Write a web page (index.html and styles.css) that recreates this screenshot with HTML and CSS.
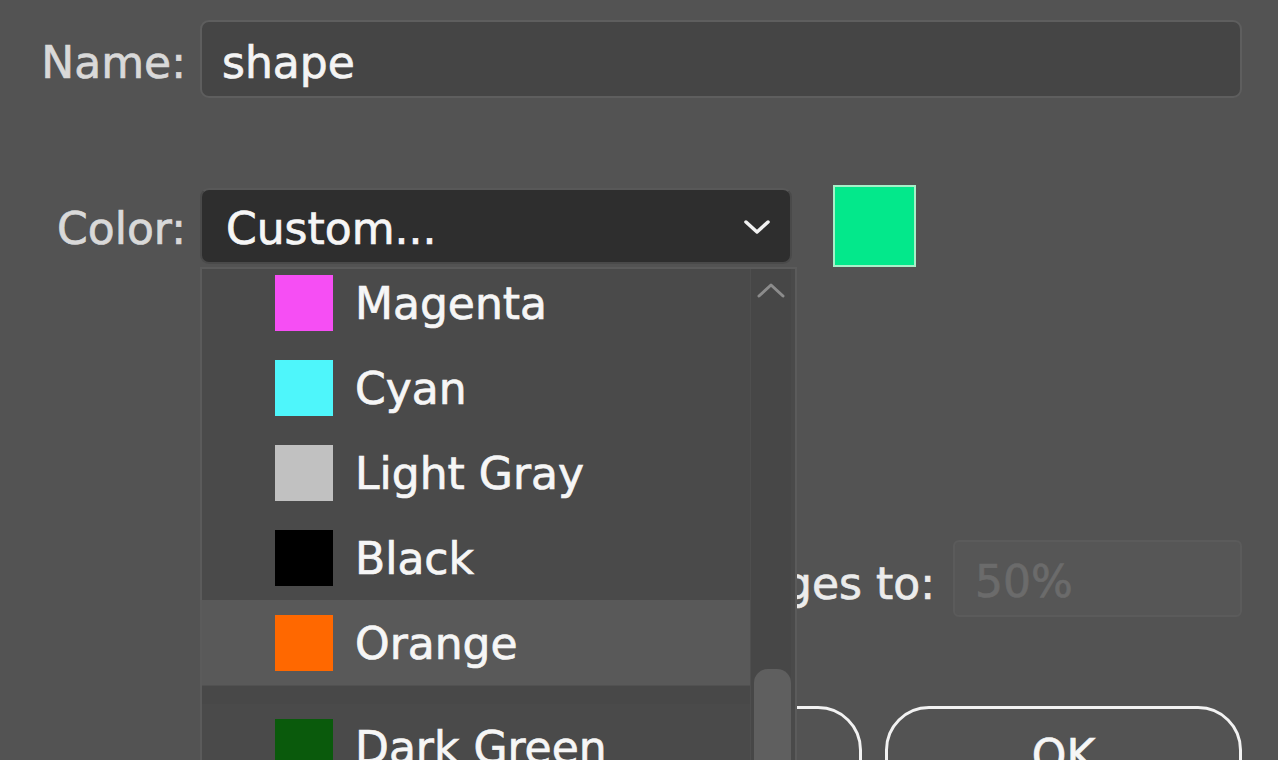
FILE: index.html
```html
<!DOCTYPE html>
<html>
<head>
<meta charset="utf-8">
<link rel="stylesheet" href="styles.css">
</head>
<body>
<div class="dialog">
  <div class="row name-row">
    <span class="lbl">Name:</span>
    <div class="text-field">shape</div>
  </div>
  <div class="row color-row">
    <span class="lbl">Color:</span>
    <div class="select-wrap">
      <div class="select">
        <span>Custom...</span>
        <svg class="chev" width="32" height="20" viewBox="0 0 32 20"><path d="M5 5 L16 15 L27 5" fill="none" stroke="#f2f2f2" stroke-width="3.5" stroke-linecap="round" stroke-linejoin="round"/></svg>
      </div>
      <div class="dropdown">
        <div class="items">
          <div class="item first"><span class="sw magenta"></span><span>Magenta</span></div>
          <div class="item"><span class="sw cyan"></span><span>Cyan</span></div>
          <div class="item"><span class="sw lgray"></span><span>Light Gray</span></div>
          <div class="item"><span class="sw black"></span><span>Black</span></div>
          <div class="item hl"><span class="sw orange"></span><span>Orange</span></div>
          <div class="sep"></div>
          <div class="item"><span class="sw dgreen"></span><span>Dark Green</span></div>
        </div>
        <div class="scrollbar">
          <svg class="up" width="32" height="18" viewBox="0 0 32 18"><path d="M4 15 L16 4 L28 15" fill="none" stroke="#8c8c8c" stroke-width="3" stroke-linecap="round" stroke-linejoin="round"/></svg>
          <div class="thumb"></div>
        </div>
      </div>
    </div>
    <div class="big-swatch"></div>
  </div>
  <div class="row dim-row">
    <span class="dim-lbl">Dim Images to:</span>
    <div class="dim-field">50%</div>
  </div>
  <div class="row btn-row">
    <button class="btn">Cancel</button>
    <button class="btn">OK</button>
  </div>
</div>
</body>
</html>
```

FILE: styles.css
```css
html, body {
  margin: 0;
  padding: 0;
  height: 100%;
  overflow: hidden;
}
body {
  background: #535353;
  font-family: "DejaVu Sans", "Liberation Sans", sans-serif;
  font-size: 44px;
  color: #f2f2f2;
  -webkit-text-stroke: 0.7px currentColor;
}
.dialog {
  padding: 20px 36px 0 0;
}
.row {
  display: flex;
  align-items: center;
}
.lbl {
  width: 186px;
  text-align: right;
  color: #d9d9d9;
  margin-right: 14px;
  flex: none;
}
.name-row .lbl {
  padding-top: 6px;
}
.color-row .lbl {
  padding-top: 4px;
}
.text-field {
  flex: 1;
  height: 74px;
  box-sizing: content-box;
  background: #454545;
  border: 2px solid #5e5e5e;
  border-radius: 9px;
  display: flex;
  align-items: center;
  padding: 6px 0 0 20px;
  height: 68px;
  color: #f4f4f4;
}
.color-row {
  margin-top: 87px;
  height: 82px;
}
.select-wrap {
  position: relative;
  width: 592px;
  flex: none;
}
.select {
  height: 72px;
  background: #2e2e2e;
  border: 2px solid #4a4a4a;
  border-top-color: #585858;
  border-radius: 9px;
  display: flex;
  align-items: center;
  justify-content: space-between;
  padding: 0 17px 0 24px;
  color: #f6f6f6;
}
.select span {
  padding-top: 5px;
}
.chev {
  display: block;
  margin-top: 2px;
}
.big-swatch {
  width: 79px;
  height: 78px;
  margin-left: 41px;
  background: #03e88b;
  border: 2px solid #a6f0c8;
  flex: none;
}
.dropdown {
  position: absolute;
  top: 79px;
  left: 0;
  width: 593px;
  height: 520px;
  background: #4a4a4a;
  border: 2px solid #5b5b5b;
  border-bottom: none;
  overflow: hidden;
  z-index: 5;
}
.items {
  margin-right: 44px;
}
.item {
  height: 85px;
  display: flex;
  align-items: center;
  padding-left: 73px;
  color: #f6f6f6;
}
.item span:last-child {
  padding-top: 2px;
}
.item.first {
  margin-top: -9px;
}
.item.hl {
  background: #595959;
}
.sep {
  height: 19px;
  border-top: 1px solid #515151;
  box-sizing: border-box;
  background: #484848;
}
.sw {
  width: 58px;
  height: 56px;
  margin-right: 22px;
  flex: none;
}
.magenta { background: #f64ef4; }
.cyan { background: #4ef6fb; }
.lgray { background: #c1c1c1; }
.black { background: #000000; }
.orange { background: #ff6800; }
.dgreen { background: #0a5a0c; }
.scrollbar {
  position: absolute;
  top: 0;
  right: 4px;
  width: 40px;
  bottom: 0;
  background: #474747;
  border-left: 1px solid #4f4f4f;
}
.up {
  position: absolute;
  top: 12px;
  left: 4px;
}
.thumb {
  position: absolute;
  top: 400px;
  left: 3px;
  right: 0;
  bottom: 0;
  background: #5f5f5f;
  border-radius: 14px 14px 0 0;
}
.dim-row {
  margin-top: 273px;
  justify-content: flex-end;
}
.dim-lbl {
  color: #ececec;
  margin-right: 18px;
  padding-top: 10px;
}
.dim-field {
  width: 265px;
  height: 67px;
  padding: 6px 0 0 20px;
  background: #565656;
  border: 2px solid #5b5b5b;
  border-radius: 6px;
  display: flex;
  align-items: center;
  color: #6b6b6b;
}
.btn-row {
  margin-top: 89px;
  justify-content: flex-end;
  gap: 23px;
}
.btn {
  width: 357px;
  height: 98px;
  background: transparent;
  border: 3px solid #f2f2f2;
  border-radius: 44px;
  color: #f6f6f6;
  font-family: "DejaVu Sans", "Liberation Sans", sans-serif;
  font-size: 44px;
  -webkit-text-stroke: 0.7px currentColor;
  padding: 0;
}
```
